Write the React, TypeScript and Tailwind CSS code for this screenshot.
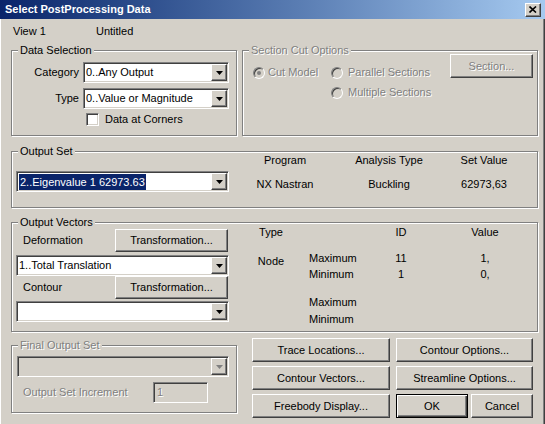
import type { ReactNode } from "react";

const raised =
  "flex items-center justify-center bg-[#d4d0c8] border border-t-white border-l-white border-r-[#404040] border-b-[#404040] shadow-[inset_-1px_-1px_0_#808080]";
const sunken =
  "border border-t-[#808080] border-l-[#808080] border-r-white border-b-white shadow-[inset_1px_1px_0_#404040,inset_-1px_-1px_0_#d4d0c8]";
const dim = "text-[#808080] [text-shadow:1px_1px_0_#fff]";

const Button = ({
  label,
  className = "",
  disabled = false,
  isDefault = false,
}: {
  label: string;
  className?: string;
  disabled?: boolean;
  isDefault?: boolean;
}) => (
  <button
    className={`${
      isDefault
        ? "flex items-center justify-center bg-[#d4d0c8] border border-black shadow-[inset_1px_1px_0_#fff,inset_-1px_-1px_0_#404040,inset_-2px_-2px_0_#808080]"
        : raised
    } ${className}`}
  >
    <span className={disabled ? dim : ""}>{label}</span>
  </button>
);

const Combo = ({
  children,
  className = "",
  disabled = false,
}: {
  children?: ReactNode;
  className?: string;
  disabled?: boolean;
}) => (
  <div
    className={`${sunken} flex h-[21px] p-[1px] ${
      disabled ? "bg-[#d4d0c8]" : "bg-white"
    } ${className}`}
  >
    <div className="flex flex-1 items-center overflow-hidden whitespace-nowrap pl-[1px]">
      {children}
    </div>
    <div className={`${raised} w-[16px]`}>
      <svg width="7" height="4" viewBox="0 0 7 4">
        <path d="M0 0h7L3.5 4z" fill={disabled ? "#808080" : "#000"} />
      </svg>
    </div>
  </div>
);

const Group = ({
  title,
  className = "",
  disabled = false,
  children,
}: {
  title: string;
  className?: string;
  disabled?: boolean;
  children?: ReactNode;
}) => (
  <div
    className={`relative border border-[#808080] shadow-[inset_1px_1px_0_#fff,1px_1px_0_#fff] ${className}`}
  >
    <span
      className={`absolute -top-[7px] left-[6px] bg-[#d4d0c8] px-[2px] leading-[13px] ${
        disabled ? dim : ""
      }`}
    >
      {title}
    </span>
    {children}
  </div>
);

const Radio = ({ checked = false }: { checked?: boolean }) => (
  <span className="flex h-[12px] w-[12px] items-center justify-center rounded-full border border-t-[#808080] border-l-[#808080] border-r-white border-b-white bg-[#d4d0c8] shadow-[inset_1px_1px_0_#404040]">
    {checked && <span className="h-[4px] w-[4px] rounded-full bg-[#808080]" />}
  </span>
);

const App = () => {
  return (
    <div className="flex h-[424px] w-[545px] flex-col overflow-hidden bg-[#d4d0c8] font-['Liberation_Sans',Arial,sans-serif] text-[11px] leading-[13px] text-black">
      {/* caption */}
      <div className="flex h-[19px] items-center justify-between bg-linear-to-r from-[#0a246a] to-[#a6caf0] pl-[5px] pr-[4px]">
        <span className="font-bold text-white">Select PostProcessing Data</span>
        <button className={`${raised} h-[14px] w-[16px]`}>
          <svg width="8" height="7" viewBox="0 0 8 7">
            <path d="M0.5 0.5L7 6.5M7 0.5L0.5 6.5" stroke="#000" strokeWidth="1.6" />
          </svg>
        </button>
      </div>

      <div className="flex-1 pl-[11px] pr-[7px] shadow-[inset_1px_0_0_#fff,inset_-1px_0_0_#404040,inset_-2px_0_0_#808080]">
        <div className="flex h-[24px] items-center pl-[2px]">
          <span className="w-[83px]">View 1</span>
          <span>Untitled</span>
        </div>

        {/* data selection + section cut */}
        <div className="mt-[7px] flex gap-[5px]">
          <Group title="Data Selection" className="h-[86px] w-[226px] pt-[11px]">
            <div className="flex items-center">
              <span className="w-[67px] text-right">Category</span>
              <Combo className="ml-[4px] w-[146px]">0..Any Output</Combo>
            </div>
            <div className="mt-[5px] flex items-center">
              <span className="w-[67px] text-right">Type</span>
              <Combo className="ml-[4px] w-[146px]">0..Value or Magnitude</Combo>
            </div>
            <div className="mt-[4px] flex items-center pl-[74px]">
              <span className={`${sunken} h-[13px] w-[13px] bg-white`} />
              <span className="ml-[6px]">Data at Corners</span>
            </div>
          </Group>

          <Group title="Section Cut Options" disabled className="flex h-[86px] flex-1">
            <div className="ml-[10px] mt-[15px] flex flex-col gap-[7px]">
              <div className="flex h-[13px] items-center">
                <span className="flex w-[78px] items-center">
                  <Radio checked />
                  <span className={`ml-[3px] ${dim}`}>Cut Model</span>
                </span>
                <Radio />
                <span className={`ml-[5px] ${dim}`}>Parallel Sections</span>
              </div>
              <div className="flex h-[13px] items-center pl-[78px]">
                <Radio />
                <span className={`ml-[5px] ${dim}`}>Multiple Sections</span>
              </div>
            </div>
            <Button label="Section..." disabled className="ml-auto mr-[4px] mt-[3px] h-[24px] w-[83px]" />
          </Group>
        </div>

        {/* output set */}
        <Group title="Output Set" className="mt-[15px] flex h-[57px]">
          <Combo className="ml-[4px] mt-[19px] w-[213px]">
            <span className="bg-[#0a246a] px-[1px] leading-[16px] text-white">
              2..Eigenvalue 1 62973.63
            </span>
          </Combo>
          <div className="ml-[11px] mt-[2px] grid grid-cols-[90px_118px_72px] content-start gap-y-[11px] text-center">
            <span>Program</span>
            <span>Analysis Type</span>
            <span>Set Value</span>
            <span>NX Nastran</span>
            <span>Buckling</span>
            <span>62973,63</span>
          </div>
        </Group>

        {/* output vectors */}
        <Group title="Output Vectors" className="mt-[14px] flex h-[110px]">
          <div className="ml-[4px] w-[213px] pt-[6px]">
            <div className="flex items-center">
              <span className="ml-[7px]">Deformation</span>
              <Button label="Transformation..." className="ml-auto mr-[1px] h-[23px] w-[113px]" />
            </div>
            <Combo className="mt-[3px]">1..Total Translation</Combo>
            <div className="flex items-center">
              <span className="ml-[7px]">Contour</span>
              <Button label="Transformation..." className="ml-auto mr-[1px] h-[23px] w-[113px]" />
            </div>
            <Combo className="mt-[2px]" />
          </div>
          <div className="ml-[16px] mt-[3px] grid grid-cols-[52px_69px_70px_98px] content-start">
            <span className="text-center">Type</span>
            <span />
            <span className="text-center">ID</span>
            <span className="text-center">Value</span>

            <span className="row-span-2 mt-[11px] self-start pt-[5px] text-center">Node</span>
            <span className="mt-[11px] flex h-[16px] items-center pl-[12px]">Maximum</span>
            <span className="mt-[11px] flex h-[16px] items-center justify-center">11</span>
            <span className="mt-[11px] flex h-[16px] items-center justify-center">1,</span>
            <span className="flex h-[16px] items-center pl-[12px]">Minimum</span>
            <span className="flex h-[16px] items-center justify-center">1</span>
            <span className="flex h-[16px] items-center justify-center">0,</span>

            <span />
            <span className="mt-[12px] flex h-[17px] items-center pl-[12px]">Maximum</span>
            <span />
            <span />
            <span />
            <span className="flex h-[17px] items-center pl-[12px]">Minimum</span>
          </div>
        </Group>

        {/* final output set + buttons */}
        <div className="flex items-start">
          <Group title="Final Output Set" disabled className="mt-[13px] h-[68px] w-[226px] pt-[10px]">
            <Combo disabled className="ml-[5px] w-[212px]" />
            <div className="mt-[5px] flex items-center">
              <span className={`ml-[11px] w-[130px] ${dim}`}>Output Set Increment</span>
              <span className={`${sunken} flex h-[21px] w-[55px] items-center pl-[3px] ${dim}`}>1</span>
            </div>
          </Group>
          <div className="ml-[15px] mt-[6px] grid grid-cols-[138px_137px] gap-x-[6px] gap-y-[4px]">
            <Button label="Trace Locations..." className="h-[24px]" />
            <Button label="Contour Options..." className="h-[24px]" />
            <Button label="Contour Vectors..." className="h-[24px]" />
            <Button label="Streamline Options..." className="h-[24px]" />
            <Button label="Freebody Display..." className="h-[24px]" />
            <div className="flex gap-[3px]">
              <Button label="OK" isDefault className="h-[24px] w-[72px]" />
              <Button label="Cancel" className="h-[24px] w-[62px]" />
            </div>
          </div>
        </div>
      </div>
    </div>
  );
};

export default App;
